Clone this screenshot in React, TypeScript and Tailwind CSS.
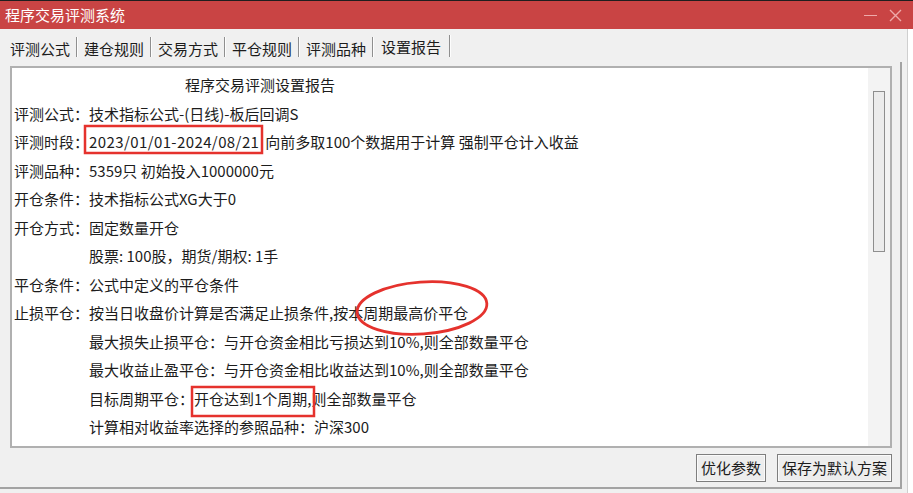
import React from 'react';

type Line = {
  label?: string;
  value: React.ReactNode;
  indent?: boolean;
};

const tabs = ['评测公式', '建仓规则', '交易方式', '平仓规则', '评测品种'];

const lines: Line[] = [
  { label: '评测公式：', value: '技术指标公式-(日线)-板后回调S' },
  {
    label: '评测时段：',
    value: (
      <>
        <span className="tracking-[0.4px]">2023/01/01-2024/08/21</span>
        <span className="ml-[6px]">向前多取100个数据用于计算 强制平仓计入收益</span>
      </>
    ),
  },
  { label: '评测品种：', value: '5359只 初始投入1000000元' },
  { label: '开仓条件：', value: '技术指标公式XG大于0' },
  { label: '开仓方式：', value: '固定数量开仓' },
  { indent: true, value: '股票: 100股，期货/期权: 1手' },
  { label: '平仓条件：', value: '公式中定义的平仓条件' },
  { label: '止损平仓：', value: '按当日收盘价计算是否满足止损条件,按本周期最高价平仓' },
  { indent: true, value: '最大损失止损平仓：与开仓资金相比亏损达到10%,则全部数量平仓' },
  { indent: true, value: '最大收益止盈平仓：与开仓资金相比收益达到10%,则全部数量平仓' },
  { indent: true, value: '目标周期平仓：开仓达到1个周期,则全部数量平仓' },
  { indent: true, value: '计算相对收益率选择的参照品种：沪深300' },
];

// 红色标注（截图上手画的框和圈）
function Marks() {
  return (
    <svg className="absolute left-0 top-0 pointer-events-none" width="913" height="493">
      <rect x="85" y="126" width="177" height="27" fill="none" stroke="#e5322d" strokeWidth="2.5" />
      <rect x="192" y="387" width="122" height="29" fill="none" stroke="#e5322d" strokeWidth="2.5" />
      <ellipse
        cx="422"
        cy="308"
        rx="65"
        ry="26"
        fill="none"
        stroke="#e5322d"
        strokeWidth="2.8"
        transform="rotate(-4 422 308)"
      />
    </svg>
  );
}

function Tab({ label, first }: { label: string; first?: boolean }) {
  return (
    <div className={`flex items-start ${first ? 'ml-[10px]' : 'ml-[6px]'}`}>
      <span className="w-[60px] mt-[10px] leading-[20px] whitespace-nowrap">{label}</span>
      <span className="ml-[6px] mt-[8px] h-[20px] w-[2px] border-l border-[#8f8f8f] bg-[#fdfdfd]" />
    </div>
  );
}

export default function App() {
  return (
    <div
      className="relative w-[913px] h-[493px] overflow-hidden bg-[#f0f0f0] text-[15px] text-[#1c1c1c] flex flex-col"
      style={{ fontFamily: '"Noto Sans CJK SC", "Noto Sans", sans-serif' }}
    >
      <div className="h-[1px] bg-[#1e1e1e]" />
      {/* 标题栏 */}
      <div className="h-[28px] bg-[#c94444] flex items-center justify-between text-white">
        <span className="pl-[5px] leading-[20px]">程序交易评测系统</span>
        <div className="flex items-center gap-[12px] pr-[11px]">
          <span className="w-[13px] h-[1.5px] bg-[#eeaaaa] mt-[1px]" />
          <svg width="13" height="13" viewBox="0 0 13 13">
            <path d="M1 1L12 12M12 1L1 12" stroke="#eeaaaa" strokeWidth="1.4" />
          </svg>
        </div>
      </div>

      <div className="flex-1 flex">
        <div className="w-[907px] flex flex-col">
          {/* 选项卡 */}
          <div className="h-[33px] flex items-start">
            {tabs.map((t, i) => (
              <Tab key={t} label={t} first={i === 0} />
            ))}
            <div className="ml-[7px] flex items-start">
              <span className="w-[60px] mt-[8px] leading-[20px] whitespace-nowrap">设置报告</span>
              <span className="ml-[8px] mt-[6px] h-[22px] w-[2px] border-l border-[#8f8f8f] bg-[#fdfdfd]" />
            </div>
          </div>

          {/* 选项卡页 */}
          <div className="w-[902px] h-[427px] border-r-2 border-b-2 border-[#a3a3a3] flex flex-col">
            <div className="ml-[10px] mt-[4px] w-[882px] h-[382px] border-2 border-[#b0b0b0] bg-white flex">
              <div className="flex-1 pl-[2px] pt-[3px] leading-[28.5px] whitespace-nowrap">
                <div className="pl-[171px]">程序交易评测设置报告</div>
                {lines.map((l, i) => (
                  <div key={i} className={`flex ${l.indent ? 'pl-[75px]' : ''}`}>
                    {l.label && <span className="w-[75px]">{l.label}</span>}
                    <span>{l.value}</span>
                  </div>
                ))}
              </div>
              <div className="w-[22px] bg-[#f3f3f3] pl-[5px] pt-[23px]">
                <div className="w-[12px] h-[161px] border border-[#8e8e8e] bg-[#ececec]" />
              </div>
            </div>

            <div className="flex justify-end gap-[11px] pr-[8px] mt-[6px]">
              <button className="w-[70px] h-[28px] border border-[#7e7e7e] bg-[#ededed] shadow-[inset_0_0_0_1px_#fafafa] leading-[20px]">
                优化参数
              </button>
              <button className="w-[115px] h-[28px] border border-[#7e7e7e] bg-[#ededed] shadow-[inset_0_0_0_1px_#fafafa] leading-[20px]">
                保存为默认方案
              </button>
            </div>
          </div>
        </div>
        <div className="flex-1 bg-white border-l border-[#cfcfcf]" />
      </div>

      <Marks />
    </div>
  );
}
